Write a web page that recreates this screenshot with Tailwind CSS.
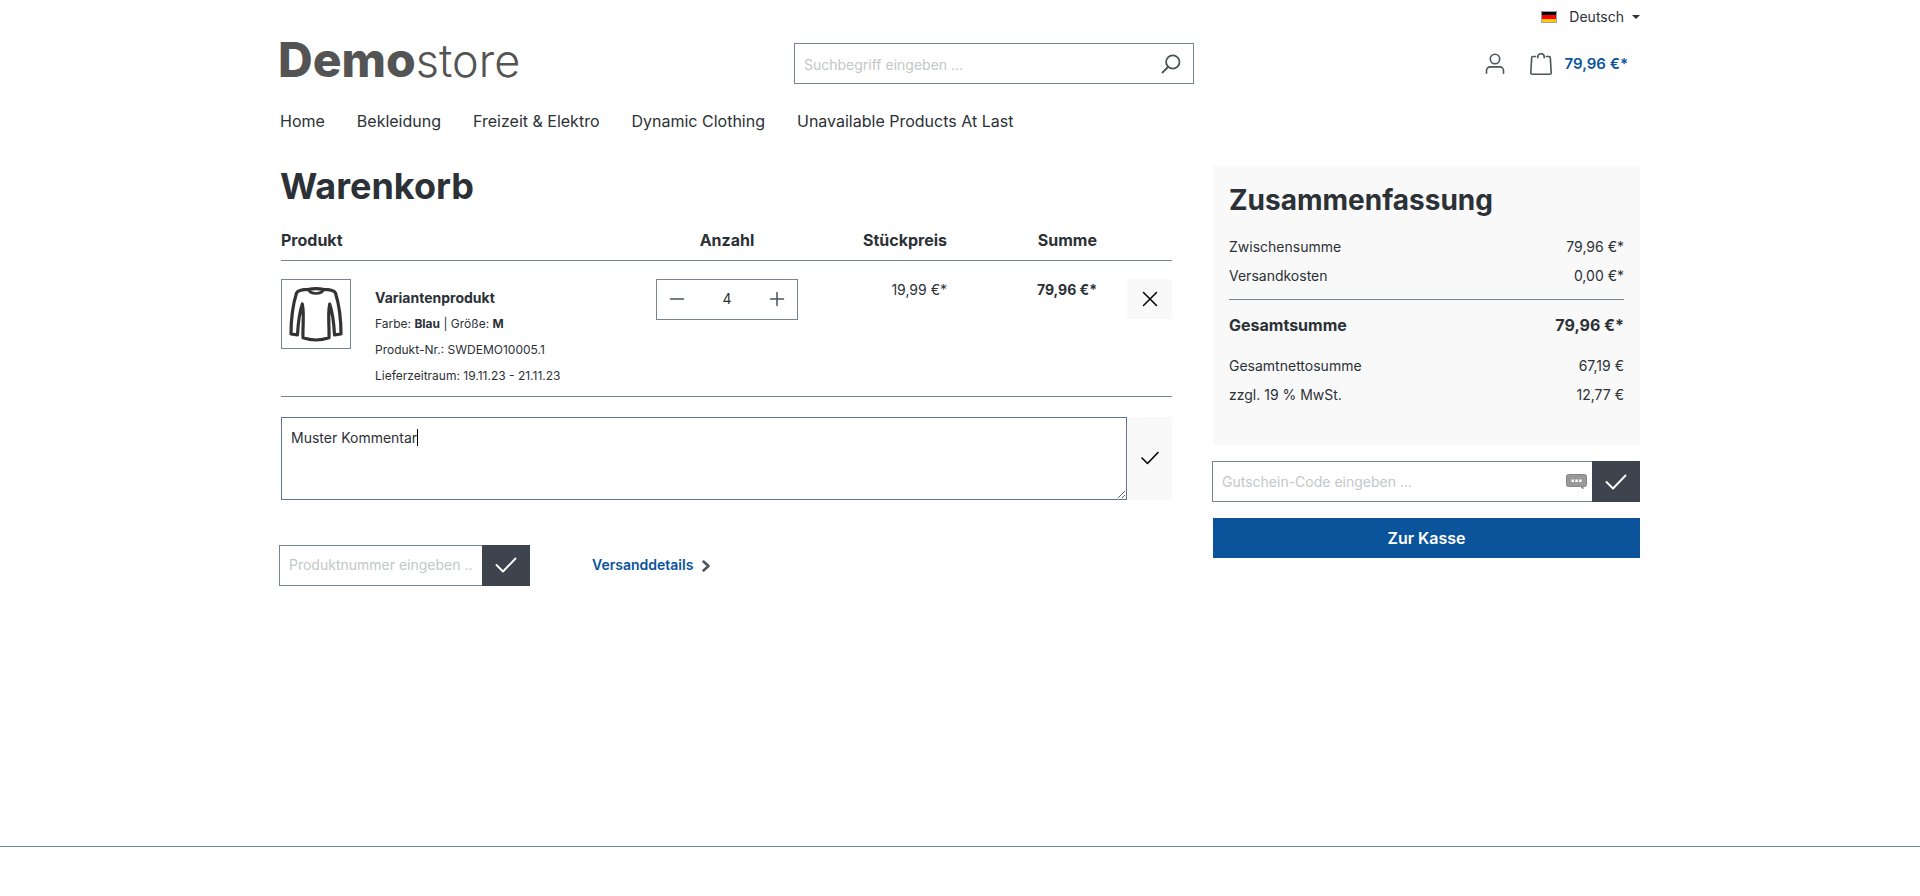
<!DOCTYPE html>
<html lang="de">
<head>
<meta charset="utf-8">
<meta name="viewport" content="width=device-width, initial-scale=1">
<title>Warenkorb | Demostore</title>
<script src="https://cdn.jsdelivr.net/npm/@tailwindcss/browser@4"></script>
</head>
<body class="flex min-h-screen flex-col bg-white font-['Inter','Liberation_Sans',sans-serif] text-sm text-[#2b3136]">
<header class="mx-auto w-full max-w-[1400px] px-5">
  <div class="flex h-[34px] items-center justify-end">
    <button type="button" class="flex items-center">
      <svg class="mr-3 h-3 w-4" viewBox="0 0 16 12" aria-hidden="true"><path fill="#000" d="M0 0h16v4H0z"/><path fill="#f00" d="M0 4h16v4H0z"/><path fill="#fc0" d="M0 8h16v4H0z"/><path fill="none" stroke="#9aa3ab" d="M.5.5h15v11H.5z"/></svg>
      <span>Deutsch</span>
      <svg class="ml-2 h-1 w-2" viewBox="0 0 8 4" aria-hidden="true"><path fill="#2b3136" d="M0 0h8L4 4z"/></svg>
    </button>
  </div>
  <div class="grid h-[59px] grid-cols-[514px_400px_1fr] items-center">
    <a href="#" class="-ml-0.5 pb-2 text-5xl leading-none font-extrabold text-[#545454]">Demo<span class="text-[45px] leading-none font-light">store</span></a>
    <form class="flex h-[41px] border border-[#798490]" role="search">
      <input type="search" aria-label="Suchbegriff" placeholder="Suchbegriff eingeben ..." class="min-w-0 flex-1 px-[9px] text-base placeholder:text-sm placeholder:text-[#c3c7c9]">
      <button type="button" aria-label="Suchen" class="flex w-11 items-center justify-center">
        <svg class="size-[22px]" viewBox="0 0 22 22" fill="none" stroke="#4a545b" stroke-width="1.8" stroke-linecap="round" aria-hidden="true"><circle cx="12.800" cy="9" r="6.700"/><path d="M8 14l-5.500 5.500"/></svg>
      </button>
    </form>
    <div class="flex items-center justify-end pr-3">
      <a href="#" aria-label="Mein Konto" class="mr-6"><svg class="size-[22px]" viewBox="0 0 22 22" fill="none" stroke="#4a545b" stroke-width="1.600" stroke-linecap="round" aria-hidden="true"><circle cx="11" cy="6" r="4.700"/><path d="M2.500 20.200v-2.700a3.600 3.600 0 0 1 3.600-3.600h9.800a3.600 3.600 0 0 1 3.600 3.600v2.700"/></svg></a>
      <a href="#" class="flex items-center gap-3 text-[15px] font-semibold text-[#0b539b]">
        <svg class="size-[22px]" viewBox="0 0 22 22" fill="none" stroke="#4a545b" stroke-width="1.600" stroke-linecap="round" stroke-linejoin="round" aria-hidden="true"><path d="M5.600 3.500H2.900a1.200 1.200 0 0 0-1.200 1.100L.800 19.700A1.400 1.400 0 0 0 2.200 21.200h17.600a1.400 1.400 0 0 0 1.400-1.500L20.300 4.600a1.200 1.200 0 0 0-1.200-1.100h-2.700M7.800 4.800V3.900a3.200 3.200 0 0 1 6.400 0v.900"/></svg>
        79,96 €*
      </a>
    </div>
  </div>
  <nav class="flex h-[55px] items-center gap-8 text-base" aria-label="Hauptnavigation">
    <a href="#">Home</a><a href="#">Bekleidung</a><a href="#">Freizeit &amp; Elektro</a><a href="#">Dynamic Clothing</a><a href="#">Unavailable Products At Last</a>
  </nav>
</header>

<main class="mx-auto mt-[18px] grid w-full max-w-[1400px] flex-1 grid-cols-[minmax(0,893fr)_minmax(0,427fr)] items-start gap-10 px-5">
  <section class="px-px">
    <h1 class="mb-[15px] -ml-px text-4xl font-bold">Warenkorb</h1>
    <table class="w-full table-fixed border-collapse">
      <colgroup><col><col class="w-[142px]"><col class="w-[149px]"><col class="w-[150px]"><col class="w-[75px]"></colgroup>
      <thead>
        <tr class="h-[39px] border-b border-[#798490] text-base font-bold">
          <th class="p-0 text-left">Produkt</th><th class="p-0 text-center">Anzahl</th><th class="p-0 text-right">Stückpreis</th><th class="p-0 text-right">Summe</th><td></td>
        </tr>
      </thead>
      <tbody>
        <tr class="border-b border-[#798490] align-top">
          <td class="px-0 pt-[18px] pb-[7px]">
            <div class="flex items-start gap-6">
              <a href="#" aria-label="Variantenprodukt" class="flex size-[70px] items-center justify-center border border-[#798490]">
                <svg class="size-[60px]" viewBox="0 0 60 60" fill="none" stroke="#333" stroke-width="3.200" stroke-linejoin="round" stroke-linecap="round" aria-hidden="true"><path d="M22.500 5.300C16 5.300 12 6 10.500 9C6.500 22 5 36 5 50L11.500 50.800C12 42 12.500 31 16.300 20C18.500 31 16.500 42 17 53.800C25 56.500 35 56.500 43 53.800C43.500 42 41.500 31 43.700 20C47.500 31 48 42 48.500 50.800L55 50C55 36 53.500 22 49.500 9C48 6 44 5.300 37.500 5.300C34 4.700 26 4.700 22.500 5.300Z"/><path stroke-width="2.600" d="M22 5.500C25 10.800 35 10.800 38 5.500"/></svg>
              </a>
              <div class="pt-[6px] text-xs leading-[26px]">
                <a href="#" class="block text-sm leading-[26px] font-bold">Variantenprodukt</a>
                <p>Farbe: <b>Blau</b> | Größe: <b>M</b></p>
                <p>Produkt-Nr.: SWDEMO10005.1</p>
                <p>Lieferzeitraum: 19.11.23 - 21.11.23</p>
              </div>
            </div>
          </td>
          <td class="px-0 pt-[18px]">
            <div class="flex h-[41px] border border-[#798490]">
              <button type="button" aria-label="Menge verringern" class="flex w-10 items-center justify-center"><svg class="size-4" viewBox="0 0 16 16" aria-hidden="true"><path stroke="#4a545b" stroke-width="1.500" stroke-linecap="round" d="M1.500 8h13"/></svg></button>
              <input type="text" inputmode="numeric" aria-label="Anzahl" value="4" class="min-w-0 flex-1 text-center">
              <button type="button" aria-label="Menge erhöhen" class="flex w-10 items-center justify-center"><svg class="size-4" viewBox="0 0 16 16" aria-hidden="true"><path stroke="#4a545b" stroke-width="1.500" stroke-linecap="round" d="M1.500 8h13M8 1.500v13"/></svg></button>
            </div>
          </td>
          <td class="px-0 pt-[19px] text-right">19,99 €*</td>
          <td class="px-0 pt-[19px] text-right font-bold">79,96 €*</td>
          <td class="px-0 pt-[18px] pl-[30px]">
            <button type="button" aria-label="Entfernen" class="flex h-10 w-full items-center justify-center bg-[#f9f9f9]"><svg class="size-4" viewBox="0 0 16 16" aria-hidden="true"><path stroke="#000" stroke-width="1.500" stroke-linecap="round" d="M1.500 1.500l13 13M14.500 1.500l-13 13"/></svg></button>
          </td>
        </tr>
      </tbody>
    </table>

    <form class="relative mt-5 flex h-[83px]">
      <textarea aria-label="Kommentar" class="min-w-0 flex-1 border border-[#5c7590] px-[9px] py-[9px] text-sm leading-[22px]">Muster Kommentar</textarea>
      <span class="absolute top-3 left-[136px] h-[17px] w-px bg-black" aria-hidden="true"></span>
      <button type="button" aria-label="Kommentar speichern" class="flex w-[45px] items-center justify-center bg-[#f9f9f9]"><svg class="h-3.5 w-[18px]" viewBox="0 0 18 14" fill="none" aria-hidden="true"><path stroke="#000" stroke-width="1.600" stroke-linecap="round" stroke-linejoin="round" d="M1 7l5.500 5.500L17 1.500"/></svg></button>
    </form>

    <div class="mt-[45px] -ml-0.5 flex items-center">
      <form class="flex h-[41px] w-[251px]">
        <input type="text" aria-label="Produktnummer" placeholder="Produktnummer eingeben ..." class="min-w-0 flex-1 border border-r-0 border-[#798490] px-[9px] text-sm placeholder:text-[#c3c7c9]">
        <button type="button" aria-label="Produkt hinzufügen" class="flex w-12 items-center justify-center bg-[#3d444d]"><svg class="h-4 w-[22px]" viewBox="0 0 22 16" fill="none" aria-hidden="true"><path stroke="#fff" stroke-width="1.900" stroke-linecap="round" stroke-linejoin="round" d="M1.500 8l6.500 6.500L20.500 1.500"/></svg></button>
      </form>
      <a href="#" class="ml-[62px] flex items-center gap-2 font-semibold text-[#0b539b]">Versanddetails
        <svg class="mt-0.5 h-3 w-2.5" viewBox="0 0 10 12" fill="none" aria-hidden="true"><path stroke="#4a545b" stroke-width="2.500" stroke-linecap="round" stroke-linejoin="round" d="M2.500 1.500L7.500 6l-5 4.500"/></svg></a>
    </div>
  </section>

  <aside>
    <section class="h-[279px] bg-[#f9f9f9] p-4">
      <h2 class="text-[28px] leading-9 font-bold">Zusammenfassung</h2>
      <dl class="mt-3.5 grid grid-cols-[1fr_auto] leading-[29px]">
        <dt>Zwischensumme</dt><dd class="text-right">79,96 €*</dd>
        <dt>Versandkosten</dt><dd class="text-right">0,00 €*</dd>
        <dt class="mt-[9px] mb-3 border-t border-[#798490] pt-[11px] text-base leading-7 font-bold">Gesamtsumme</dt><dd class="mt-[9px] mb-3 border-t border-[#798490] pt-[11px] text-right text-base leading-7 font-bold">79,96 €*</dd>
        <dt>Gesamtnettosumme</dt><dd class="text-right">67,19 €</dd>
        <dt>zzgl. 19 % MwSt.</dt><dd class="text-right">12,77 €</dd>
      </dl>
    </section>
    <form class="mt-4 -ml-px flex h-[41px]">
      <div class="flex min-w-0 flex-1 items-center border border-r-0 border-[#798490] pr-[5px]">
        <input type="text" aria-label="Gutschein-Code" placeholder="Gutschein-Code eingeben ..." class="h-full min-w-0 flex-1 px-[9px] text-sm placeholder:text-[#c3c7c9]">
        <svg class="h-4 w-[21px] shrink-0" viewBox="0 0 21 16" aria-hidden="true"><path fill="#999" stroke="#858585" d="M2.500.500h16a2 2 0 0 1 2 2v8a2 2 0 0 1-2 2h-1.500v2.500l-2.500-2.500h-12a2 2 0 0 1-2-2v-8a2 2 0 0 1 2-2z"/><path fill="#fff" d="M5.500 5.500h2.500v2.500H5.500zM9.300 5.500h2.500v2.500H9.300zM13.100 5.500h2.500v2.500h-2.500z"/></svg>
      </div>
      <button type="button" aria-label="Gutschein einlösen" class="flex w-12 items-center justify-center bg-[#3d444d]"><svg class="h-4 w-[22px]" viewBox="0 0 22 16" fill="none" aria-hidden="true"><path stroke="#fff" stroke-width="1.900" stroke-linecap="round" stroke-linejoin="round" d="M1.500 8l6.500 6.500L20.500 1.500"/></svg></button>
    </form>
    <a href="#" class="mt-4 flex h-10 items-center justify-center bg-[#0b539b] text-base font-semibold text-white">Zur Kasse</a>
  </aside>
</main>
<footer class="mt-10 h-[50px] border-t border-[#798490]"></footer>
</body>
</html>
